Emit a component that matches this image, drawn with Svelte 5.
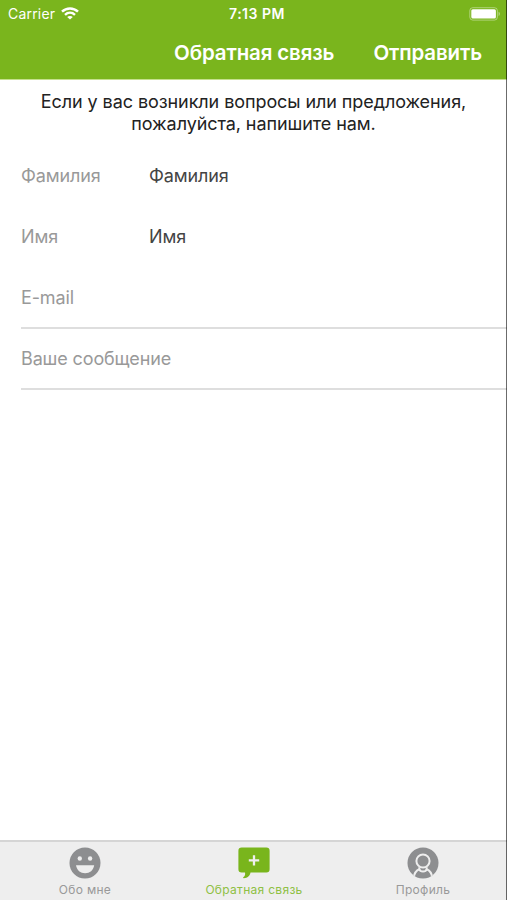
<script>
  const fields = [
    { label: 'Фамилия', value: 'Фамилия', line: false },
    { label: 'Имя', value: 'Имя', line: false },
    { label: 'E-mail', value: '', line: true },
    { label: 'Ваше сообщение', value: '', line: true }
  ];
</script>

<div class="screen">
  <header>
    <div class="status">
      <div class="carrier">
        <span class="carrier-name">Carrier</span>
        <svg width="18" height="13" viewBox="0 0 18 13" fill="none" stroke="#fff">
          <path d="M1 4.600C5.500.3 12.500.3 17 4.600" stroke-width="2.500" />
          <path d="M4 7.800c2.900-2.700 7.100-2.700 10 0" stroke-width="2.400" />
          <path d="M9 12.600 6.200 10c1.600-1.500 4-1.500 5.600 0z" fill="#fff" stroke="none" />
        </svg>
      </div>
      <span class="time">7:13 PM</span>
      <svg class="battery" width="32" height="14" viewBox="0 0 32 14">
        <rect x=".8" y=".7" width="27.600" height="12.400" rx="3" fill="none" stroke="#fff" stroke-opacity=".4" />
        <rect x="2.300" y="2.200" width="24.600" height="9.400" rx="1.500" fill="#fff" />
        <path d="M29.600 4.800c1.600.6 1.600 3.600 0 4.200z" fill="#fff" fill-opacity=".5" />
      </svg>
    </div>
    <nav>
      <span>Обратная связь</span>
      <span>Отправить</span>
    </nav>
  </header>

  <main>
    <p>Если у вас возникли вопросы или предложения,<br />пожалуйста, напишите нам.</p>
    {#each fields as f}
      <div class="row" class:line={f.line}>
        <span class="label">{f.label}</span>
        <span class="value">{f.value}</span>
      </div>
    {/each}
  </main>

  <footer>
    <div class="tab">
      <svg width="32" height="32" viewBox="0 0 32 32">
        <circle cx="16" cy="16" r="15.500" fill="#8d8e90" />
        <circle cx="10.800" cy="11.500" r="2.200" fill="#eee" />
        <circle cx="21.100" cy="11.500" r="2.200" fill="#eee" />
        <path d="M7 18.200h18.200c-.8 5-4.400 8-9.100 8s-8.300-3-9.100-8z" fill="#eee" />
      </svg>
      <span>Обо мне</span>
    </div>
    <div class="tab active">
      <svg width="32" height="32" viewBox="0 0 32 32">
        <path d="M3.700.5h24.600a3.300 3.300 0 0 1 3.300 3.300v18.500a3.300 3.300 0 0 1-3.300 3.300H12.500c-.6 3.200-2.900 5.500-6.700 5.700-.8 0-.9-.7-.3-1.200 1.300-1.100 1.900-2.600 1.500-4.500H3.700a3.300 3.300 0 0 1-3.300-3.300V3.800A3.300 3.300 0 0 1 3.700.5z" fill="#79b51c" />
        <path d="M16 8.200v10.400M10.800 13.400h10.400" stroke="#eee" stroke-width="2.300" />
      </svg>
      <span>Обратная связь</span>
    </div>
    <div class="tab">
      <svg width="32" height="32" viewBox="0 0 32 32">
        <defs><clipPath id="disc"><circle cx="16" cy="16" r="15.500" /></clipPath></defs>
        <circle cx="16" cy="16" r="15.500" fill="#8d8e90" />
        <g clip-path="url(#disc)" fill="none" stroke="#eee" stroke-width="2">
          <circle cx="16" cy="14" r="6.600" />
          <path d="M12.300 20.300v2C9 23.500 7.300 26.500 6.500 31M19.700 20.300v2c3.300 1.200 5 4.200 5.800 8.700" />
          <path d="M12.300 22.300c.8 3 6.600 3 7.400 0" />
        </g>
      </svg>
      <span>Профиль</span>
    </div>
  </footer>
  <div class="edge"></div>
</div>

<style>
  :global(body) { margin: 0; }
  .screen {
    position: relative;
    width: 507px;
    height: 900px;
    display: flex;
    flex-direction: column;
    background: #fff;
    overflow: hidden;
    font-family: Inter, "Liberation Sans", sans-serif;
    white-space: nowrap;
  }
  .edge {
    position: absolute;
    top: 0;
    right: 0;
    width: 1px;
    height: 900px;
    background: rgba(0, 0, 0, 0.58);
  }
  header {
    box-sizing: border-box;
    height: 80px;
    border-bottom: 1px solid #c5e08d;
    background: #7ab51d;
    color: #fff;
  }
  .status {
    display: grid;
    grid-template-columns: 1fr auto 1fr;
    align-items: center;
    height: 27px;
    padding: 0 6px 0 8px;
    font-size: 14px;
  }
  .carrier { display: flex; align-items: center; gap: 6px; }
  .carrier-name { letter-spacing: 0.2px; }
  .time { font-weight: 600; font-size: 14px; letter-spacing: 0.5px; padding-left: 5px; }
  .battery { justify-self: end; }
  nav {
    display: flex;
    justify-content: flex-end;
    align-items: center;
    gap: 39px;
    height: 51px;
    padding-right: 25px;
    font-size: 20.500px;
    font-weight: 600;
    letter-spacing: -0.13px;
  }
  main { flex: 1; }
  p {
    margin: 0;
    padding-top: 11px;
    height: 55px;
    text-align: center;
    font-size: 18px;
    letter-spacing: -0.08px;
    line-height: 21.500px;
    color: #222;
  }
  .row {
    box-sizing: border-box;
    display: flex;
    align-items: center;
    height: 61px;
    margin-left: 21px;
    border-bottom: 2px solid transparent;
    font-size: 18px;
    letter-spacing: -0.13px;
  }
  .row.line { border-color: #dedede; }
  .label { width: 128px; color: #999; }
  .value { color: #444; }
  footer {
    box-sizing: border-box;
    display: flex;
    height: 60px;
    border-top: 2px solid #d5d5d5;
    background: #eee;
  }
  .tab {
    flex: 1;
    display: flex;
    flex-direction: column;
    align-items: center;
    padding-top: 5px;
    font-size: 12px;
    letter-spacing: 0.3px;
    line-height: 15px;
    color: #999;
  }
  .tab svg { display: block; margin-bottom: 3px; }
  .tab span { padding-left: 1px; }
  .active { color: #8fc044; }
</style>
